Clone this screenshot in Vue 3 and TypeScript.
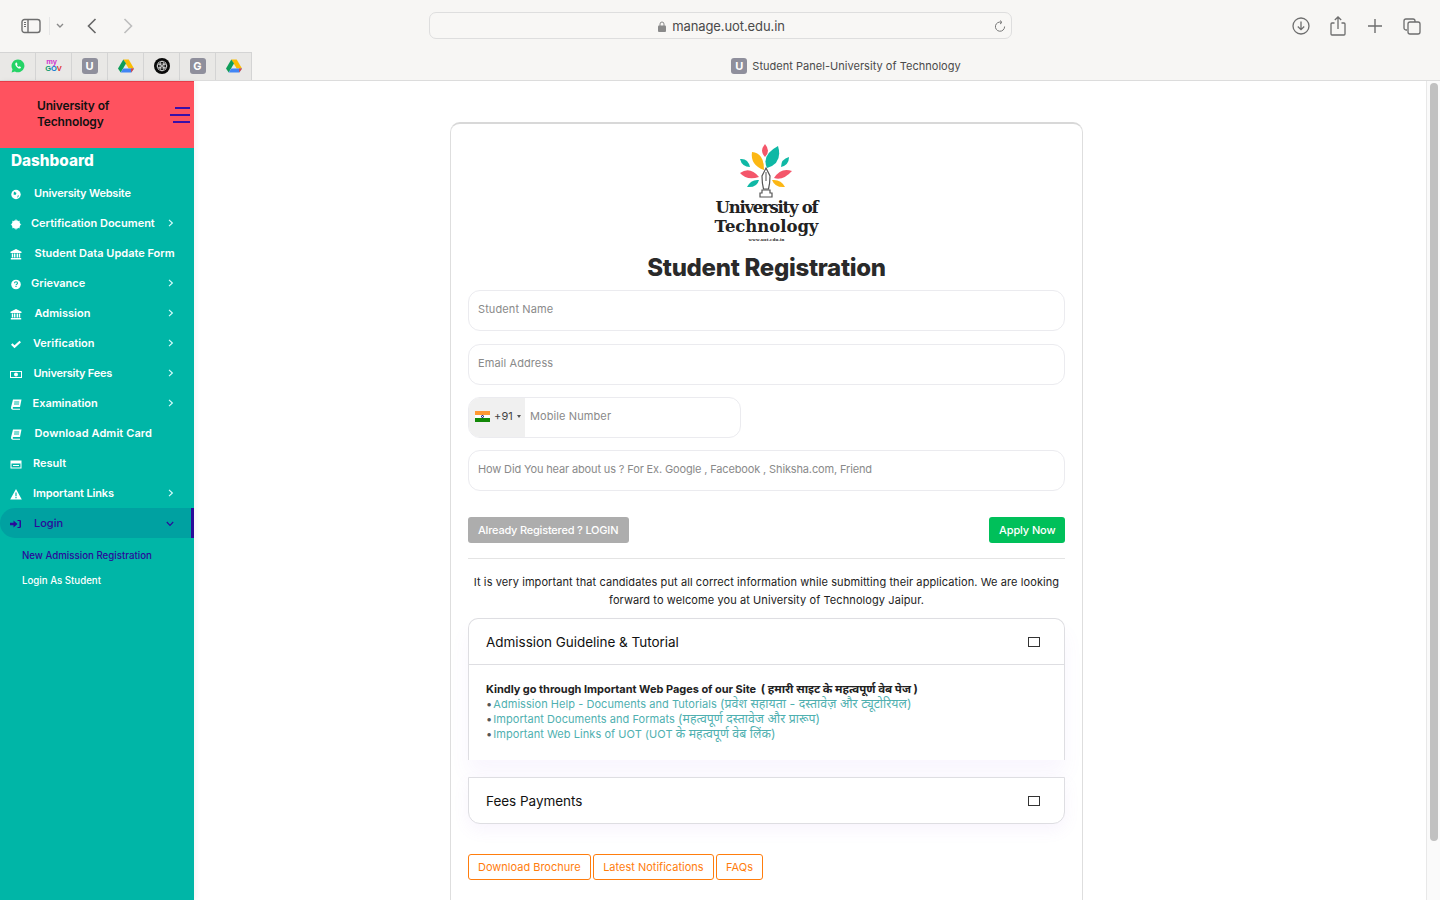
<script setup lang="ts">
interface NavItem { label: string; icon: string; gap: number; chevron: boolean; ls: number }
const nav: NavItem[] = [
  { label: 'University Website', icon: 'globe', gap: 12, chevron: false, ls: -0.2 },
  { label: 'Certification Document', icon: 'cert', gap: 9, chevron: true, ls: 0 },
  { label: 'Student Data Update Form', icon: 'bank', gap: 12.5, chevron: false, ls: 0 },
  { label: 'Grievance', icon: 'help', gap: 9, chevron: true, ls: 0 },
  { label: 'Admission', icon: 'bank', gap: 12.5, chevron: true, ls: 0 },
  { label: 'Verification', icon: 'check', gap: 11, chevron: true, ls: 0 },
  { label: 'University Fees', icon: 'money', gap: 11.5, chevron: true, ls: -0.25 },
  { label: 'Examination', icon: 'book', gap: 10.5, chevron: true, ls: 0 },
  { label: 'Download Admit Card', icon: 'book', gap: 12.5, chevron: false, ls: 0.1 },
  { label: 'Result', icon: 'card', gap: 11, chevron: false, ls: 0 },
  { label: 'Important Links', icon: 'warn', gap: 11, chevron: true, ls: -0.13 },
]
const tabs = ['wa', 'gov', 'u', 'drive', 'ai', 'g', 'drive']
const links = [
  { en: 'Admission Help - Documents and Tutorials', hi: '(प्रवेश सहायता - दस्तावेज़ और ट्यूटोरियल)' },
  { en: 'Important Documents and Formats', hi: '(महत्वपूर्ण दस्तावेज और प्रारूप)' },
  { en: 'Important Web Links of UOT (UOT', hi: 'के महत्वपूर्ण वेब लिंक)' },
]
</script>

<template>
  <div class="page">
    <header class="chrome">
      <div class="toolbar">
        <div class="tool-left">
          <svg class="ic" width="20" height="16" viewBox="0 0 20 16" fill="none" stroke="#6e6e6e" stroke-width="1.4"><rect x="1" y="1.5" width="18" height="13" rx="2.5"/><path d="M7 1.5v13"/><path d="M3 4.5h2M3 6.5h2M3 8.5h2" stroke-width="1"/></svg>
          <span class="sep"></span>
          <svg width="8" height="6" viewBox="0 0 8 6" fill="none" stroke="#8a8a8a" stroke-width="1.4"><path d="M1 1l3 3 3-3"/></svg>
          <svg class="back" width="10" height="16" viewBox="0 0 10 16" fill="none" stroke="#666" stroke-width="1.6"><path d="M8.5 1L1.5 8l7 7"/></svg>
          <svg class="fwd" width="10" height="16" viewBox="0 0 10 16" fill="none" stroke="#bdbdbd" stroke-width="1.6"><path d="M1.5 1l7 7-7 7"/></svg>
        </div>
        <div class="address">
          <svg width="8" height="11" viewBox="0 0 8 11"><path d="M2 5V3a2 2 0 014 0v2" fill="none" stroke="#8a8a8a"/><rect y="4.5" width="8" height="6.5" rx="1" fill="#8a8a8a"/></svg>
          <span>manage.uot.edu.in</span>
          <svg class="reload" width="12" height="13" viewBox="0 0 12 13" fill="none" stroke="#777" stroke-width="1"><path d="M7.5 2.3A4.6 4.6 0 1 0 10.6 6.5"/><path d="M6 .5l2 1.9-2 1.6"/></svg>
        </div>
        <div class="tool-right">
          <svg width="18" height="18" viewBox="0 0 18 18" fill="none" stroke="#6e6e6e" stroke-width="1.3"><circle cx="9" cy="9" r="8"/><path d="M9 4.5v8M5.8 9.5L9 12.7l3.2-3.2"/></svg>
          <svg width="16" height="20" viewBox="0 0 16 20" fill="none" stroke="#6e6e6e" stroke-width="1.3"><path d="M4.5 7H2a1 1 0 00-1 1v10a1 1 0 001 1h12a1 1 0 001-1V8a1 1 0 00-1-1h-2.500"/><path d="M8 13V1M4.800 4L8 1l3.200 3"/></svg>
          <svg width="14" height="14" viewBox="0 0 14 14" fill="none" stroke="#6e6e6e" stroke-width="1.4"><path d="M7 0v14M0 7h14"/></svg>
          <svg width="18" height="17" viewBox="0 0 18 17" fill="none" stroke="#6e6e6e" stroke-width="1.3"><path d="M4 12H3a2 2 0 01-2-2V3a2 2 0 012-2h7a2 2 0 012 2v1"/><rect x="5" y="4" width="12" height="12" rx="2"/></svg>
        </div>
      </div>
      <div class="tabrow">
        <div class="favtabs">
          <div v-for="(t, i) in tabs" :key="i" class="favtab">
            <svg v-if="t === 'wa'" width="14" height="14" viewBox="0 0 14 14"><path d="M7 .5a6.400 6.400 0 00-5.500 9.700L.6 13.400l3.300-.9A6.400 6.400 0 107 .5z" fill="#25d366"/><path d="M4.800 3.800c-.9.800-.7 2.200.5 3.700 1.300 1.600 3 2.600 4.200 1.700.5-.4.500-1 .3-1.200L8.500 7.200l-.8.700C7 7.600 6.300 6.900 6 6l.6-.8-.8-1.500c-.2-.2-.6-.2-1 .1z" fill="#fff"/></svg>
            <span v-else-if="t === 'gov'" class="gov"><span class="my">my</span><span><b class="g1">G</b><b class="g2">O</b><b class="g3">V</b></span></span>
            <span v-else-if="t === 'u' || t === 'g'" class="letter">{{ t.toUpperCase() }}</span>
            <svg v-else-if="t === 'drive'" width="16" height="14" viewBox="0 0 16 14"><path d="M5.300.5h5.400L16 9.500h-5.300z" fill="#fbbc04"/><path d="M5.300.5L0 9.500l2.700 4L8 4.500z" fill="#0f9d58"/><path d="M2.700 13.500h10.600l2.700-4H5.300z" fill="#4285f4"/><path d="M13.300 13.500L16 9.500h-3z" fill="#ea4335"/></svg>
            <svg v-else width="16" height="16" viewBox="0 0 16 16" fill="none"><circle cx="8" cy="8" r="8" fill="#0a0a0a"/><g stroke="#ddd" stroke-width=".8"><circle cx="8" cy="8" r="4.800"/><ellipse cx="8" cy="8" rx="4.800" ry="2"/><ellipse cx="8" cy="8" rx="2" ry="4.800"/><path d="M4 4.500l8 7M12 4.500l-8 7"/></g></svg>
          </div>
        </div>
        <div class="pagetab">
          <span class="letter small">U</span>
          <span>Student Panel-University of Technology</span>
        </div>
      </div>
    </header>

    <div class="body">
      <aside class="side">
        <div class="brand">
          <div class="brand-name">University of<br />Technology</div>
          <div class="burger"><i class="b1"></i><i class="b2"></i><i class="b3"></i></div>
        </div>
        <div class="dash">Dashboard</div>
        <nav class="menu">
          <a v-for="item in nav" :key="item.label" class="mi">
            <svg class="mi-ic" width="12" height="12" viewBox="0 0 12 12" fill="#fff">
              <template v-if="item.icon === 'globe'"><circle cx="6" cy="6.500" r="4.700"/><path d="M4 3.500l2.500 1.500-1 2-2-.5zM8 7l1 1-2 2z" fill="#00b6a7"/></template>
              <template v-else-if="item.icon === 'cert'"><circle cx="6" cy="6.500" r="4.300"/><path d="M6 1.200l1 1h-2zM6 11.800l-1-1h2zM.7 6.500l1-1v2zM11.300 6.500l-1 1v-2zM2.200 2.700l1.400.2-1.200 1.200zM9.800 10.300l-1.400-.2 1.200-1.200zM9.800 2.700l-.2 1.400-1.200-1.200zM2.200 10.300l.2-1.400 1.200 1.200z"/></template>
              <template v-else-if="item.icon === 'bank'"><path d="M6 1L.5 3.800V5h11V3.800z"/><path d="M1.800 5.500h1.400v4H1.800zM4 5.500h1.400v4H4zM6.600 5.500H8v4H6.600zM8.800 5.500h1.400v4H8.800z"/><path d="M.8 10h10.400v1.500H.8z"/></template>
              <template v-else-if="item.icon === 'help'"><circle cx="6" cy="6.500" r="4.800"/><path d="M4.500 5.200a1.500 1.500 0 113 0c0 1-1.500 1-1.500 2" fill="none" stroke="#00b6a7" stroke-width="1.100"/><path d="M5.400 8h1.200v1.100H5.400z" fill="#00b6a7"/></template>
              <template v-else-if="item.icon === 'check'"><path d="M1 6.800l1.500-1.500 2 2L9.500 2.800 11 4.300 4.500 10.200z"/></template>
              <template v-else-if="item.icon === 'money'"><path fill-rule="evenodd" d="M0 3h12v7H0zM1 4v5h10V4z"/><circle cx="6" cy="6.500" r="2"/></template>
              <template v-else-if="item.icon === 'book'"><path fill-rule="evenodd" d="M3 1.500h8.500L10 9H3.200a1.100 1.100 0 000 1.800H10v.9H2.800A1.900 1.900 0 011 9.500zM4.200 3.500v1h5v-1zM4 5.500v1h5v-1z"/></template>
              <template v-else-if="item.icon === 'card'"><path fill-rule="evenodd" d="M.5 2.500h11v8H.5zM1.500 5.500v4h9v-4z"/><path d="M3 7h6v1H3z"/></template>
              <template v-else-if="item.icon === 'warn'"><path fill-rule="evenodd" d="M6 1l5.800 10.500H.2zM5.400 4.500v3.700h1.200V4.500zM5.400 9v1.200h1.200V9z"/></template>
            </svg>
            <span class="mi-text" :style="{ marginLeft: item.gap + 'px', letterSpacing: item.ls + 'px' }">{{ item.label }}</span>
            <svg v-if="item.chevron" class="chev" width="6" height="8" viewBox="0 0 6 8" fill="none" stroke="#dff" stroke-width="1.100"><path d="M1 .8L4.400 4 1 7.200"/></svg>
          </a>
          <a class="mi active">
            <svg class="mi-ic" width="12" height="12" viewBox="0 0 12 12" fill="#2a0a9a"><path d="M0 4.800h3.500V2.500L7.500 6l-4 3.500V7.200H0z"/><path d="M7.500 2h2.300c.7 0 1.200.5 1.200 1.200v5.600c0 .7-.5 1.200-1.200 1.200H7.500V9h2V3h-2z"/></svg>
            <span class="mi-text login-text">Login</span>
            <svg class="chev down" width="8" height="6" viewBox="0 0 8 6" fill="none" stroke="#2a0a9a" stroke-width="1.100"><path d="M.8 1L4 4.400 7.200 1"/></svg>
          </a>
          <div class="subs">
            <a class="sub current">New Admission Registration</a>
            <a class="sub">Login As Student</a>
          </div>
        </nav>
      </aside>

      <main class="main">
        <section class="card">
          <div class="logo">
            <svg width="56" height="55" viewBox="0 0 56 55">
              <path d="M26 1Q20 8 26 14Q32 8 26 1z" fill="#f4566a"/>
              <path d="M13 9Q25 10 25 27Q11 22 13 9z" fill="#fcb714"/>
              <path d="M39 3Q44 20 28 25Q22 12 39 3z" fill="#0fb8a5"/>
              <path d="M1 16Q9 15 11 24Q3 24 1 16z" fill="#0fb8a5"/>
              <path d="M50 14Q50 22 42 24Q42 16 50 14z" fill="#0fb8a5"/>
              <path d="M1 30Q11 23 20 34Q8 38 1 30z" fill="#f4566a"/>
              <path d="M53 28Q44 38 35 35Q42 24 53 28z" fill="#f4566a"/>
              <path d="M8 44Q12 36 20 37Q18 45 8 44z" fill="#0fb8a5"/>
              <path d="M46 44Q36 45 33 37Q42 36 46 44z" fill="#fcb714"/>
              <path d="M27 25L31 33Q31 40 29.500 46H24.500Q23 40 23 33z" fill="#fff" stroke="#555" stroke-width="1.200"/>
              <path d="M27 29v9" stroke="#555"/>
              <path d="M23 47h8v3h2v4H21v-4h2z" fill="#fff" stroke="#555" stroke-width="1.200"/>
            </svg>
            <div class="logo-name"><span class="ln1">University of</span><br /><span class="ln2">Technology</span></div>
            <div class="logo-url">www.uot.edu.in</div>
          </div>
          <h1 class="title">Student Registration</h1>

          <div class="fields">
            <div class="field first">Student Name</div>
            <div class="field">Email Address</div>
            <div class="field phone">
              <div class="dial">
                <span class="flag"><i></i></span>
                <span>+91</span>
                <span class="caret"></span>
              </div>
              <span class="ph-text">Mobile Number</span>
            </div>
            <div class="field long">How Did You hear about us ? For Ex. Google , Facebook , Shiksha.com, Friend</div>
          </div>

          <div class="actions">
            <button class="btn gray">Already Registered ? LOGIN</button>
            <button class="btn green">Apply Now</button>
          </div>

          <p class="note">It is very important that candidates put all correct information while submitting their application. We are looking forward to welcome you at University of Technology Jaipur.</p>

          <div class="acc open">
            <div class="acc-head"><span>Admission Guideline &amp; Tutorial</span><i class="box"></i></div>
            <div class="acc-body">
              <strong>Kindly go through Important Web Pages of our Site <span class="hi head-hi">( हमारी साइट के महत्वपूर्ण वेब पेज )</span></strong>
              <div v-for="l in links" :key="l.en" class="lnk"><span class="dot">•</span> <a>{{ l.en }} <span class="hi">{{ l.hi }}</span></a></div>
            </div>
          </div>

          <div class="acc closed">
            <div class="acc-head"><span>Fees Payments</span><i class="box"></i></div>
          </div>

          <div class="outline-row">
            <button class="btn outline">Download Brochure</button>
            <button class="btn outline">Latest Notifications</button>
            <button class="btn outline">FAQs</button>
          </div>
        </section>
      </main>

      <div class="scrollbar"><div class="thumb"></div></div>
    </div>
  </div>
</template>

<style>
html, body { margin: 0; height: 100%; overflow: hidden; background: #fff; }
</style>

<style scoped>
* { box-sizing: border-box; }
.page { width: 1440px; height: 900px; display: flex; flex-direction: column; overflow: hidden; font-family: Inter, "Noto Sans", "Noto Sans CJK SC", sans-serif; color: #222; }
.chrome { height: 81px; flex: none; background: #f7f6f4; border-bottom: 1px solid #dcdcdc; }
.toolbar { height: 52px; display: grid; grid-template-columns: 429px 583px 1fr; align-items: center; }
.tool-left { display: flex; align-items: center; padding-left: 21px; }
.sep { width: 1px; height: 18px; background: #e6e6e6; margin: 0 6px 0 8px; }
.back { margin-left: 23px; }
.fwd { margin-left: 26px; }
.address { position: relative; height: 27px; margin-bottom: 2px; padding: 2px 0 0 2px; border: 1px solid #dedede; border-radius: 7px; display: flex; align-items: center; justify-content: center; gap: 6px; font-size: 13px; letter-spacing: -.1px; color: #4a4a4a; background: #f8f7f5; }
.reload { position: absolute; right: 5px; top: 7px; }
.tool-right { display: grid; grid-template-columns: repeat(4, 37px); justify-content: end; justify-items: center; align-items: center; padding-right: 10px; }
.tabrow { height: 28px; display: flex; align-items: stretch; position: relative; }
.favtabs { display: flex; width: 252px; background: #e9e8e6; border-top: 1px solid #d4d4d4; border-right: 1px solid #d4d4d4; }
.favtab { flex: 1; display: flex; align-items: center; justify-content: center; border-right: 1px solid #d4d4d4; padding-bottom: 2px; }
.favtab:last-child { border-right: 0; }
.gov { display: flex; flex-direction: column; font: 700 7.500px/6.500px "Liberation Sans", sans-serif; }
.gov b { font-weight: 700; }
.my { color: #c3c; padding-left: 1px; }
.g1 { color: #0a9a6a; } .g2 { color: #0a7ad0; } .g3 { color: #e03030; }
.letter { width: 16px; height: 16px; border-radius: 3px; background: #8f8f9c; color: #fff; font: 700 11px/16px Inter, sans-serif; text-align: center; }
.pagetab { flex: 1; display: flex; align-items: center; justify-content: center; gap: 5px; font-size: 11px; color: #4a4a4a; letter-spacing: .03px; }
.body { flex: 1; min-height: 0; display: flex; }
.side { width: 194px; flex: none; background: #00b6a7; color: #fff; box-shadow: 2px 0 6px rgba(0,0,0,.05); z-index: 1; }
.brand { height: 67px; background: #ff525f; border-top: 1px solid #e63c48; display: flex; align-items: center; justify-content: space-between; padding: 0 4px 0 37px; }
.brand-name { font-size: 12px; line-height: 16px; font-weight: 600; color: #111; letter-spacing: -.15px; margin-top: -2px; }
.burger { display: flex; flex-direction: column; align-items: flex-end; gap: 5px; }
.burger i { display: block; height: 2px; background: #3a10a8; }
.b1 { width: 15px; } .b2 { width: 20px; } .b3 { width: 17px; }
.dash { height: 30px; padding-left: 11px; font-size: 15.300px; line-height: 26px; font-weight: 800; color: #fff; }
.menu { display: flex; flex-direction: column; }
.mi { position: relative; height: 30px; display: flex; align-items: center; padding-left: 10px; font-size: 11px; font-weight: 600; color: #fff; }
.mi-ic { flex: none; margin-top: 2px; }
.mi-text { white-space: nowrap; }
.login-text { margin-left: 12px; }
.chev { position: absolute; left: 168px; top: 11px; }
.chev.down { left: 166px; top: 13px; }
.active { color: #2a0a9a; background: #00a1a1; border-radius: 15px 0 0 15px; font-weight: 500; border-right: 3px solid #2a0a9a; }
.subs { display: flex; flex-direction: column; padding: 5px 0 0 22px; }
.sub { height: 25px; line-height: 25px; font-size: 9.700px; letter-spacing: 0; color: #fff; font-weight: 500; }
.sub.current { color: #2a0a9a; }
.main { flex: 1; min-width: 0; background: #fff; padding: 41px 0 0 256px; overflow: hidden; }
.card { width: 633px; height: 900px; border: 1px solid #dedede; border-top: 2px solid #d8d8d8; border-radius: 10px; padding: 19px 17px 0; }
.logo { display: flex; flex-direction: column; align-items: center; }
.logo-name { margin-top: 0; font-family: "DejaVu Serif", "Liberation Serif", serif; font-weight: 700; font-size: 16.500px; line-height: 19px; text-align: center; color: #222; }
.ln1 { letter-spacing: -1.25px; }
.ln2 { letter-spacing: -.05px; }
.logo-url { font: 700 5px/6px "Liberation Serif", serif; color: #222; margin-top: 1px; letter-spacing: .2px; }
.title { margin: 7px 0 0; font-size: 24px; line-height: 36px; height: 37px; font-weight: 800; text-align: center; color: #2a2a2a; letter-spacing: -.3px; }
.fields { display: flex; flex-direction: column; gap: 12px; margin-top: 3px; }
.field { height: 41px; padding: 0 9px 3px; border: 1px solid #ebebef; border-radius: 12px; display: flex; align-items: center; font-size: 11px; color: #8a8a8a; letter-spacing: .1px; background: #fff; }
.first { margin-bottom: 1px; }
.long { letter-spacing: -.14px; }
.phone { width: 273px; padding: 0; overflow: hidden; }
.dial { width: 56px; height: 100%; background: #f0f0f0; display: flex; align-items: center; gap: 4px; padding: 0 0 3px 6px; color: #444; font-size: 11px; }
.flag { width: 15px; height: 11px; background: linear-gradient(#f93 0 33%, #fff 33% 66%, #128807 66%); display: flex; align-items: center; justify-content: center; }
.flag i { width: 3px; height: 3px; border-radius: 50%; border: 1px solid #006; }
.caret { border: 2.500px solid transparent; border-top: 3px solid #555; border-bottom: 0; }
.ph-text { margin-left: 5px; padding-bottom: 3px; }
.actions { display: flex; justify-content: space-between; margin-top: 26px; padding-bottom: 15px; border-bottom: 1px solid #e4e4e4; }
.btn { height: 26px; padding: 0 9px; border: 1px solid transparent; border-radius: 3px; font-family: inherit; font-size: 11px; font-weight: 500; white-space: nowrap; }
.gray { background: #adadad; color: #fff; letter-spacing: -.2px; width: 161px; text-align: left; }
.green { background: #00c05a; color: #fff; width: 76px; letter-spacing: -.1px; }
.note { margin: 14px 0 0; font-size: 11px; line-height: 18px; color: #222; text-align: center; letter-spacing: .09px; }
.acc { border: 1px solid #dedee2; background: #fff; }
.acc.open { margin-top: 9px; height: 142px; border-bottom: 0; border-radius: 10px 10px 0 0; box-shadow: 0 14px 20px rgba(160,110,230,.06); }
.acc.closed { margin-top: 17px; height: 47px; border-radius: 0 0 12px 12px; box-shadow: 0 6px 16px rgba(160,110,230,.08); }
.acc-head { height: 46px; padding: 0 24px 0 17px; display: flex; align-items: center; justify-content: space-between; font-size: 13.500px; color: #111; letter-spacing: -.03px; }
.open .acc-head { border-bottom: 1px solid #dedee2; }
.box { width: 12px; height: 10px; border: 1.500px solid #333; display: block; }
.acc-body { padding: 17px 17px 0; font-size: 11px; line-height: 15px; }
.acc-body strong { display: block; color: #222; font-weight: 700; letter-spacing: -.03px; }
.hi { font-size: 12.300px; line-height: 1; }
.head-hi { font-size: 11.500px; margin-left: 2px; }
.lnk { color: #555; white-space: nowrap; }
.dot { margin-right: -2px; }
.lnk a { color: #4fb0b0; letter-spacing: .05px; }
.outline-row { display: flex; gap: 2.500px; margin-top: 30px; }
.outline { background: #fff; border-color: #ff7d0d; color: #ff7d0d; font-weight: 400; letter-spacing: 0; }
.scrollbar { width: 14px; flex: none; background: #fafafa; border-left: 1px solid #e8e8e8; padding: 2px 2px 0 3px; }
.thumb { width: 8px; height: 758px; border-radius: 4px; background: #c1c1c1; }
</style>
